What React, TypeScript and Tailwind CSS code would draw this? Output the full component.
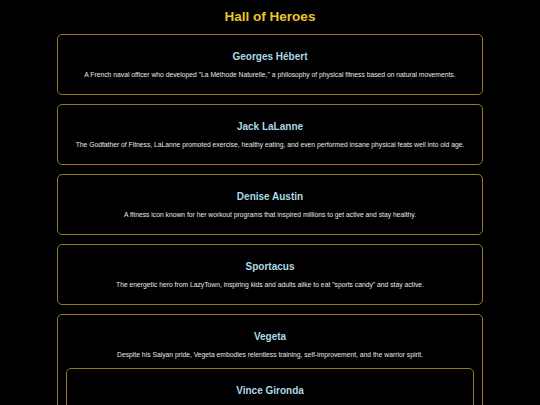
import React from "react";

type Hero = { name: string; desc: string; children?: Hero[] };

const heroes: Hero[] = [
  {
    name: "Georges Hébert",
    desc: "A French naval officer who developed \"La Méthode Naturelle,\" a philosophy of physical fitness based on natural movements.",
  },
  {
    name: "Jack LaLanne",
    desc: "The Godfather of Fitness, LaLanne promoted exercise, healthy eating, and even performed insane physical feats well into old age.",
  },
  {
    name: "Denise Austin",
    desc: "A fitness icon known for her workout programs that inspired millions to get active and stay healthy.",
  },
  {
    name: "Sportacus",
    desc: "The energetic hero from LazyTown, inspiring kids and adults alike to eat \"sports candy\" and stay active.",
  },
  {
    name: "Vegeta",
    desc: "Despite his Saiyan pride, Vegeta embodies relentless training, self-improvement, and the warrior spirit.",
    children: [
      {
        name: "Vince Gironda",
        desc: "The Iron Guru, famous for his unconventional training methods and his focus on aesthetics and nutrition.",
      },
    ],
  },
];

function HeroCard({ hero }: { hero: Hero }) {
  return (
    <div className="border border-[#927a26] rounded-[5px] px-[8px] pt-[16px] pb-[15px] flex flex-col">
      <h2 className="text-[10px] leading-[12px] h-[12px] font-bold text-center text-[#add8e6]">
        {hero.name}
      </h2>
      <p className="mt-[8px] text-[6.75px] leading-[8px] h-[8px] text-center text-[#e8e8e8] whitespace-nowrap">
        {hero.desc}
      </p>
      {hero.children && (
        <div className="mt-[9px] flex flex-col gap-[9px]">
          {hero.children.map((c) => (
            <HeroCard key={c.name} hero={c} />
          ))}
        </div>
      )}
    </div>
  );
}

export default function App() {
  return (
    <div
      className="min-h-[405px] bg-black"
      style={{ fontFamily: '"Liberation Sans", Arial, sans-serif' }}
    >
      <div className="h-[33px] flex items-center justify-center">
        <h1 className="text-[13.5px] leading-[16px] font-bold text-[#eac52a]">
          Hall of Heroes
        </h1>
      </div>
      <div className="w-[426px] mx-auto mt-[1px] flex flex-col gap-[9px] pb-4">
        {heroes.map((h) => (
          <HeroCard key={h.name} hero={h} />
        ))}
      </div>
    </div>
  );
}
